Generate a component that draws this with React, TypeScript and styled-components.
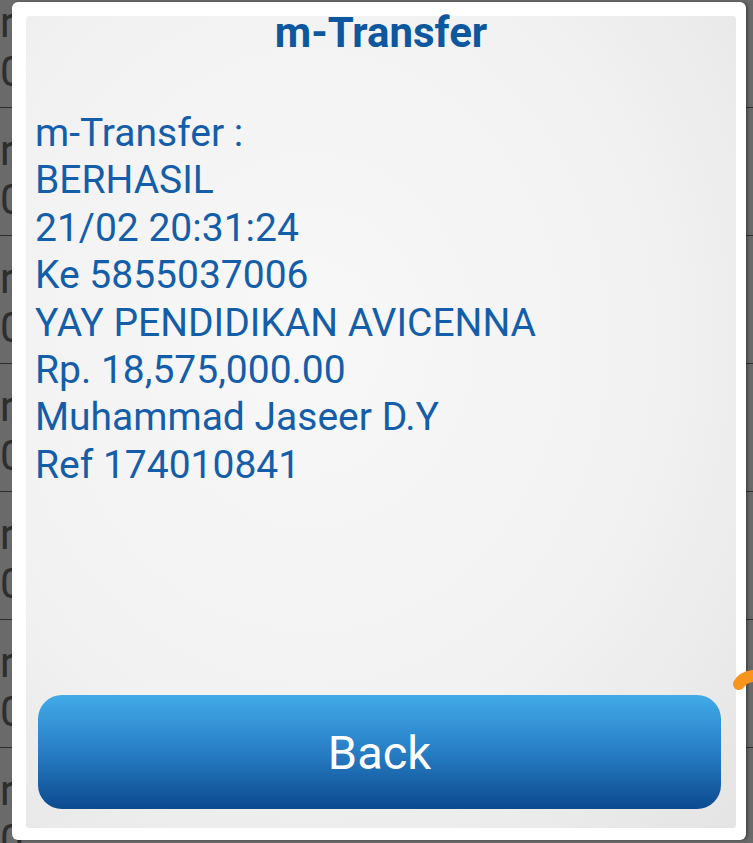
import styled, { createGlobalStyle } from "styled-components";

const GlobalStyle = createGlobalStyle`
  html, body {
    margin: 0;
    padding: 0;
    background: #6a6a6a;
  }
  body {
    font-family: Roboto, "Noto Sans", "Liberation Sans", sans-serif;
  }
`;

const rows = [0, 1, 2, 3, 4, 5, 6];

const lines = [
  "m-Transfer :",
  "BERHASIL",
  "21/02 20:31:24",
  "Ke 5855037006",
  "YAY PENDIDIKAN AVICENNA",
  "Rp. 18,575,000.00",
  "Muhammad Jaseer D.Y",
  "Ref 174010841",
];

export default function App() {
  return (
    <>
      <GlobalStyle />
      <Screen>
        <HistoryList>
          {rows.map((r) => (
            <HistoryRow key={r}>
              <RowText>r</RowText>
              <RowText>0</RowText>
            </HistoryRow>
          ))}
          <HistoryRow>
            <RowText>r</RowText>
            <RowText>0001 2345 6789 0000</RowText>
          </HistoryRow>
        </HistoryList>

        <Dialog>
          <Panel>
            <Title>m-Transfer</Title>
            <Message>
              {lines.map((l) => (
                <Line key={l}>{l}</Line>
              ))}
            </Message>
            <BackButton type="button">Back</BackButton>
          </Panel>
        </Dialog>

        <EdgeGlow width="24" height="28" viewBox="0 0 24 28">
          <path d="M10 16 C 13 11, 17 9, 24 8" stroke="#f7941d" strokeWidth="12" strokeLinecap="round" fill="none" />
        </EdgeGlow>
      </Screen>
    </>
  );
}

const Screen = styled.div`
  position: relative;
  width: 753px;
  height: 843px;
  overflow: hidden;
  background: #6a6a6a;
`;

const HistoryList = styled.div`
  display: flex;
  flex-direction: column;
  margin-top: -20px;
`;

const HistoryRow = styled.div`
  height: 128px;
  box-sizing: border-box;
  padding-top: 18px;
  border-bottom: 1px solid #2f2f2f;
  display: flex;
  flex-direction: column;
  color: #2e2e2e;
  font-size: 42px;
  line-height: 49px;
`;

const RowText = styled.div`
  white-space: nowrap;
`;

const EdgeGlow = styled.svg`
  position: absolute;
  left: 729px;
  top: 668px;
`;

const Dialog = styled.div`
  position: absolute;
  left: 12px;
  top: 2px;
  width: 734px;
  height: 838px;
  box-sizing: border-box;
  padding: 14px 10px 12px 14px;
  background: #ffffff;
  border-radius: 6px;
  box-shadow: 2px 0 3px rgba(0, 0, 0, 0.35);
`;

const Panel = styled.div`
  height: 100%;
  box-sizing: border-box;
  display: flex;
  flex-direction: column;
  padding: 0 15px 19px 12px;
  border-radius: 3px;
  background: radial-gradient(ellipse at 40% 40%, #f8f8f8 0%, #f1f1f1 60%, #e4e4e4 100%);
`;

const Title = styled.div`
  text-align: center;
  font-size: 42px;
  font-weight: 700;
  line-height: 34px;
  color: #0d579f;
  margin-left: -12px;
  margin-right: -15px;
`;

const Message = styled.div`
  flex: 1;
  margin-top: 60px;
  margin-left: -3px;
  color: #145ea9;
  font-size: 39px;
  line-height: 47.4px;
`;

const Line = styled.div`
  white-space: nowrap;
`;

const BackButton = styled.button`
  height: 114px;
  width: 100%;
  border: none;
  border-radius: 24px;
  background: linear-gradient(#42aae7 0%, #2a82c9 45%, #0b4a8f 100%);
  color: #ffffff;
  font-family: Roboto, "Noto Sans", "Liberation Sans", sans-serif;
  font-size: 47px;
  cursor: pointer;
`;
